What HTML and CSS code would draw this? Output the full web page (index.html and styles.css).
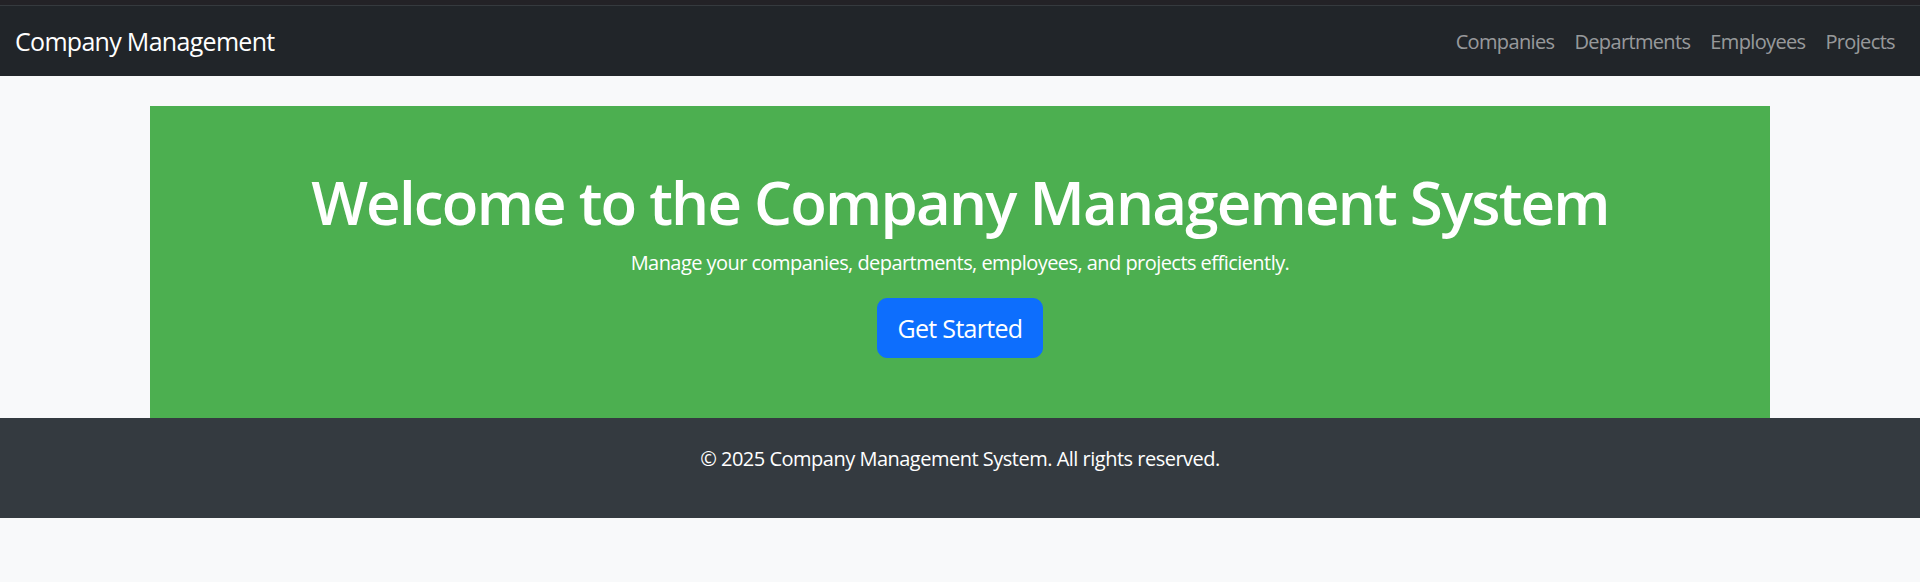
FILE: index.html
```html
<!DOCTYPE html>
<html lang="en">
<head>
<meta charset="utf-8">
<title>Company Management</title>
<link rel="stylesheet" href="styles.css">
</head>
<body>
<div class="topstrip"></div>
<nav class="navbar">
  <a class="brand" href="#">Company Management</a>
  <ul class="nav">
    <li><a href="#">Companies</a></li>
    <li><a href="#">Departments</a></li>
    <li><a href="#">Employees</a></li>
    <li><a href="#">Projects</a></li>
  </ul>
</nav>
<main class="container">
  <section class="hero">
    <h1 class="hero-title">Welcome to the Company Management System</h1>
    <p class="hero-text">Manage your companies, departments, employees, and projects efficiently.</p>
    <a class="btn" href="#">Get Started</a>
  </section>
</main>
<footer class="footer">
  <p>© 2025 Company Management System. All rights reserved.</p>
</footer>
</body>
</html>
```

FILE: styles.css
```css
* { box-sizing: border-box; }
html, body { margin: 0; padding: 0; }
body {
  background: #f8f9fa;
  font-family: "Open Sans", "Noto Sans", sans-serif;
  font-size: 20px;
  line-height: 1.5;
  color: #212529;
}
a { text-decoration: none; }
.topstrip {
  height: 6px;
  background: #232226;
  border-bottom: 1px solid #353a3e;
}
.navbar {
  height: 70px;
  background: #212529;
  display: flex;
  align-items: center;
  justify-content: space-between;
  padding: 2px 15px 0;
}
.brand {
  color: #fff;
  font-size: 25px;
  letter-spacing: -0.7px;
  line-height: 1.5;
}
.nav {
  list-style: none;
  margin: 0;
  padding: 0;
  display: flex;
}
.nav a {
  display: block;
  padding: 10px;
  color: rgba(255,255,255,0.55);
  letter-spacing: -0.65px;
}
.container {
  max-width: 1650px;
  margin: 30px auto 0;
  padding: 0 15px;
}
.hero {
  background: #4caf50;
  color: #fff;
  text-align: center;
  padding: 60px;
}
.hero-title {
  margin: 0 0 10px;
  font-size: 60px;
  font-weight: 600;
  line-height: 1.2;
  letter-spacing: -1.8px;
}
.hero-text {
  margin: 0 0 20px;
  letter-spacing: -0.55px;
}
.btn {
  display: inline-block;
  height: 60px;
  padding: 0 20px;
  line-height: 58px;
  border: 1px solid #0d6efd;
  border-radius: 10px;
  background: #0d6efd;
  color: #fff;
  font-size: 25px;
  letter-spacing: -0.7px;
}
.footer {
  height: 100px;
  background: #343a40;
  color: #fff;
  text-align: center;
  padding-top: 26px;
}
.footer p { margin: 0; letter-spacing: -0.5px; }
```
